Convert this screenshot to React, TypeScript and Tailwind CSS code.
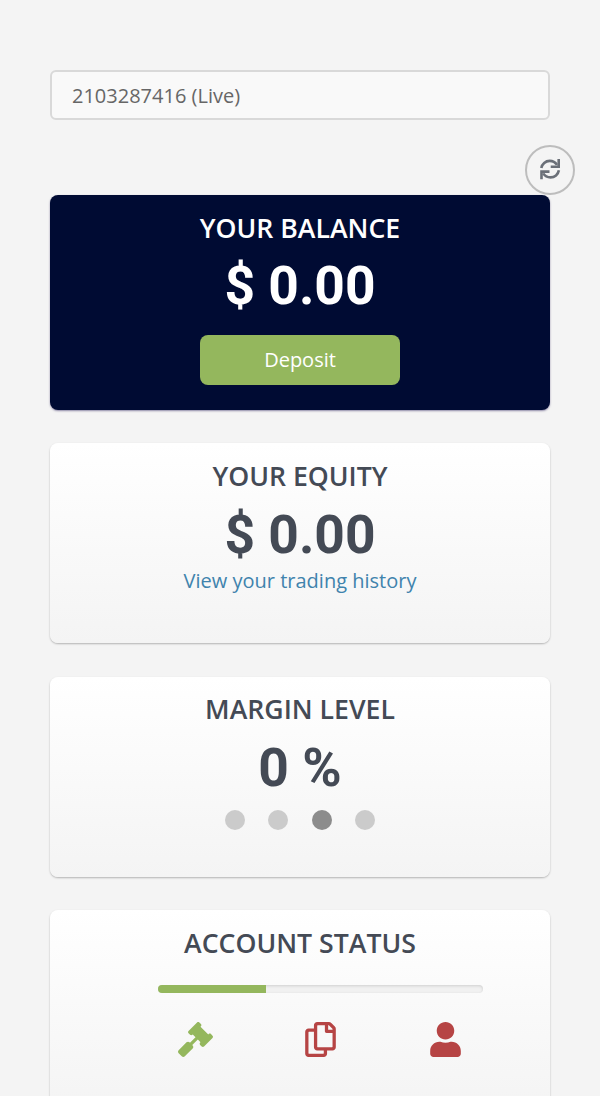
import React from "react";
import { FaGavel, FaRegCopy, FaUser } from "react-icons/fa";

interface CardProps {
  title: string;
  value?: string;
  className: string;
  children?: React.ReactNode;
}

const lightCard =
  "h-[200px] bg-linear-to-b from-white to-[#f4f4f4] text-[#444a55] shadow-[0_1px_2px_rgba(0,0,0,0.27)]";

const statusItems = [
  { name: "trade", icon: <FaGavel />, color: "text-[#94b75d]" },
  { name: "documents", icon: <FaRegCopy />, color: "text-[#b64444]" },
  { name: "profile", icon: <FaUser />, color: "text-[#b64444]" },
];

const Card = ({ title, value, className, children }: CardProps) => (
  <section
    className={`flex flex-col items-center rounded-lg pt-[13.6px] ${className}`}
  >
    <h2 className="text-[26.67px] leading-[37px] font-semibold whitespace-nowrap">
      {title}
    </h2>
    {value && (
      <p className="font-[Roboto,sans-serif] text-[53.33px] leading-[60px] mt-[10.6px] font-bold whitespace-nowrap">
        {value}
      </p>
    )}
    {children}
  </section>
);

const RefreshIcon = () => (
  <svg
    width="22"
    height="22"
    viewBox="0 0 22 22"
    fill="none"
    stroke="currentColor"
    strokeWidth="2.6"
  >
    <path d="M2.300 9C3 4.900 6.500 1.900 10.700 1.900c3 0 5.700 1.500 7.300 4" />
    <path d="M19.700 0v7.700h-8" />
    <path d="M19.900 11.300c-.7 4.100-4.200 7.100-8.400 7.100-3 0-5.700-1.500-7.300-4" />
    <path d="M2.500 20.300v-7.700h8" />
  </svg>
);

export default function App() {
  return (
    <main className="h-[1096px] overflow-hidden bg-[#f4f4f4] px-[50px] pt-[70px] font-['Open_Sans',sans-serif]">
      <div className="flex h-[50px] items-center rounded-md border-2 border-[#d9d9d9] bg-[#f9f9f9] pl-5 pt-px text-xl text-[#666]">
        2103287416 (Live)
      </div>

      <button className="-mr-[25px] mt-[25px] ml-auto flex size-[50px] items-center justify-center rounded-full border-2 border-[#bdbdbd] text-[#6b7078]">
        <RefreshIcon />
      </button>

      <div className="flex flex-col gap-[33.330px]">
        <Card
          title="YOUR BALANCE"
          value="$ 0.00"
          className="h-[215px] bg-[#000b33] text-white shadow-[0_1px_2px_rgba(40,30,90,0.5)]"
        >
          <button className="mt-[18.8px] h-[50px] w-[200px] rounded-lg bg-[#94b75d] text-xl">
            Deposit
          </button>
        </Card>

        <Card title="YOUR EQUITY" value="$ 0.00" className={lightCard}>
          <a className="text-xl leading-[32px] text-[#4083ad]">
            View your trading history
          </a>
        </Card>

        <Card title="MARGIN LEVEL" value="0 %" className={lightCard}>
          <div className="mt-[11.8px] flex gap-[23.300px]">
            <span className="size-5 rounded-full bg-[#cbcbcb]" />
            <span className="size-5 rounded-full bg-[#cbcbcb]" />
            <span className="size-5 rounded-full bg-[#8c8c8c]" />
            <span className="size-5 rounded-full bg-[#cbcbcb]" />
          </div>
        </Card>

        <Card title="ACCOUNT STATUS" className={lightCard}>
          <div className="ml-[41px] mt-[24.4px] h-[8px] w-[325px] overflow-hidden rounded-full bg-[#f1f1f1] shadow-[inset_0_1px_3px_rgba(0,0,0,0.14)]">
            <div className="h-full w-1/3 bg-[#94b75d]" />
          </div>
          <div className="ml-[41px] mt-[29px] grid w-[375px] grid-cols-3 justify-items-center text-[35px]">
            {statusItems.map((item) => (
              <span key={item.name} className={item.color}>
                {item.icon}
              </span>
            ))}
          </div>
        </Card>
      </div>
    </main>
  );
}
